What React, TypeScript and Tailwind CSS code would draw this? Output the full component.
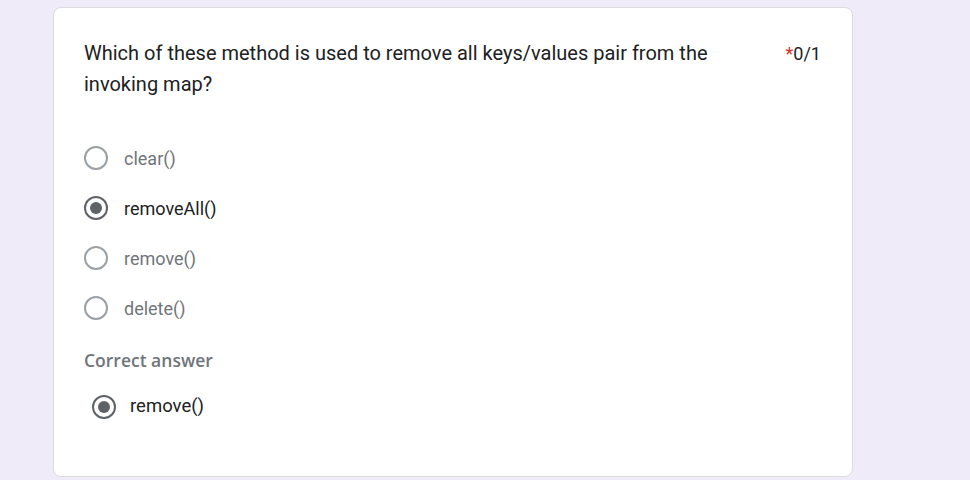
import React from 'react';

const OPTIONS = [
  { label: 'clear()', selected: false },
  { label: 'removeAll()', selected: true },
  { label: 'remove()', selected: false },
  { label: 'delete()', selected: false },
];

const Radio: React.FC<{ checked: boolean }> = ({ checked }) => (
  <span
    className={`flex h-[24px] w-[24px] shrink-0 items-center justify-center rounded-full border-2 ${
      checked ? 'border-[#5f6368]' : 'border-[#9aa0a6]'
    }`}
  >
    {checked && <span className="h-[12px] w-[12px] rounded-full bg-[#5f6368]" />}
  </span>
);

export default function App() {
  return (
    <div className="min-h-[480px] w-full overflow-hidden bg-[#f0ebf8] pt-[7px] font-['Roboto',_'Liberation_Sans',_sans-serif]">
      <div className="ml-[53px] h-[470px] w-[800px] rounded-[8px] border border-[#dadce0] bg-white pl-[30px] pr-[31px] pt-[30px]">
        {/* Question header */}
        <div className="flex items-start justify-between">
          <p className="w-[660px] text-[20px] leading-[31px] text-[#202124]">
            Which of these method is used to remove all keys/values pair from the invoking map?
          </p>
          <div className="text-[18px] leading-[31px] text-[#202124]">
            <span className="text-[#d93025]">*</span>0/1
          </div>
        </div>

        {/* Options */}
        <div className="mt-[33px] flex flex-col">
          {OPTIONS.map((opt) => (
            <div key={opt.label} className="flex h-[50px] items-center gap-[16px]">
              <Radio checked={opt.selected} />
              <span
                className={`text-[18px] ${opt.selected ? 'text-[#202124]' : 'text-[#70757a]'}`}
              >
                {opt.label}
              </span>
            </div>
          ))}
        </div>

        {/* Correct answer */}
        <div className="mt-[15px] font-['Open_Sans',_sans-serif] text-[17.5px] font-semibold leading-[24px] text-[#70757a]">
          Correct answer
        </div>
        <div className="ml-[8px] mt-[23px] flex h-[24px] items-center gap-[14px]">
          <Radio checked />
          <span className="text-[18.5px] text-[#202124]">remove()</span>
        </div>
      </div>
    </div>
  );
}
